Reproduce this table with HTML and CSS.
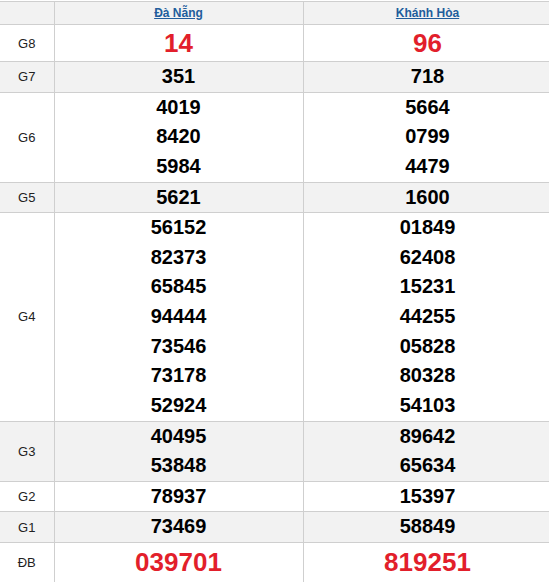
FILE: index.html
```html
<!DOCTYPE html>
<html lang="vi">
<head>
<meta charset="utf-8">
<title>Kết quả xổ số</title>
<link rel="stylesheet" href="styles.css">
</head>
<body>
<table class="kq">
  <colgroup>
    <col class="c-label">
    <col class="c-prov">
    <col class="c-prov">
  </colgroup>
  <thead>
    <tr class="head">
      <th></th>
      <th><a href="#">Đà Nẵng</a></th>
      <th><a href="#">Khánh Hòa</a></th>
    </tr>
  </thead>
  <tbody>
    <tr class="g8">
      <td class="lbl">G8</td>
      <td class="big"><div>14</div></td>
      <td class="big"><div>96</div></td>
    </tr>
    <tr class="alt">
      <td class="lbl">G7</td>
      <td class="num"><div>351</div></td>
      <td class="num"><div>718</div></td>
    </tr>
    <tr>
      <td class="lbl">G6</td>
      <td class="num"><div>4019</div><div>8420</div><div>5984</div></td>
      <td class="num"><div>5664</div><div>0799</div><div>4479</div></td>
    </tr>
    <tr class="alt">
      <td class="lbl">G5</td>
      <td class="num"><div>5621</div></td>
      <td class="num"><div>1600</div></td>
    </tr>
    <tr>
      <td class="lbl">G4</td>
      <td class="num"><div>56152</div><div>82373</div><div>65845</div><div>94444</div><div>73546</div><div>73178</div><div>52924</div></td>
      <td class="num"><div>01849</div><div>62408</div><div>15231</div><div>44255</div><div>05828</div><div>80328</div><div>54103</div></td>
    </tr>
    <tr class="alt">
      <td class="lbl">G3</td>
      <td class="num"><div>40495</div><div>53848</div></td>
      <td class="num"><div>89642</div><div>65634</div></td>
    </tr>
    <tr>
      <td class="lbl">G2</td>
      <td class="num"><div>78937</div></td>
      <td class="num"><div>15397</div></td>
    </tr>
    <tr class="alt">
      <td class="lbl">G1</td>
      <td class="num"><div>73469</div></td>
      <td class="num"><div>58849</div></td>
    </tr>
    <tr class="db">
      <td class="lbl">ĐB</td>
      <td class="big"><div>039701</div></td>
      <td class="big"><div>819251</div></td>
    </tr>
  </tbody>
</table>
</body>
</html>
```
FILE: styles.css
```css
html, body {
  margin: 0;
  padding: 0;
  background: #ffffff;
  overflow: hidden;
}

body {
  padding-top: 1px;
  font-family: "Liberation Sans", Arial, sans-serif;
}

.kq {
  width: 552px;
  table-layout: fixed;
  border-collapse: collapse;
}

.c-label { width: 54px; }
.c-prov { width: 249px; }

.kq th,
.kq td {
  border: 1px solid #cfcfcf;
  padding: 0;
  text-align: center;
  vertical-align: middle;
}

.kq tr > :first-child {
  border-left: none;
}

.head th {
  background: #f2f2f2;
  height: 22px;
  font-size: 12px;
  font-weight: bold;
}

.head a {
  color: #215d9c;
  text-decoration: underline;
}

.alt td {
  background: #f2f2f2;
}

.lbl {
  font-size: 13px;
  color: #222222;
}

.num div {
  font-size: 20px;
  font-weight: bold;
  color: #000000;
  line-height: 29.62px;
}

.big div {
  font-size: 26px;
  font-weight: bold;
  color: #e21f2b;
  line-height: 36px;
}

.db td {
  padding-bottom: 6px;
}

.db .lbl {
  padding-bottom: 6px;
}

.db .big div {
  line-height: 38px;
}
```
